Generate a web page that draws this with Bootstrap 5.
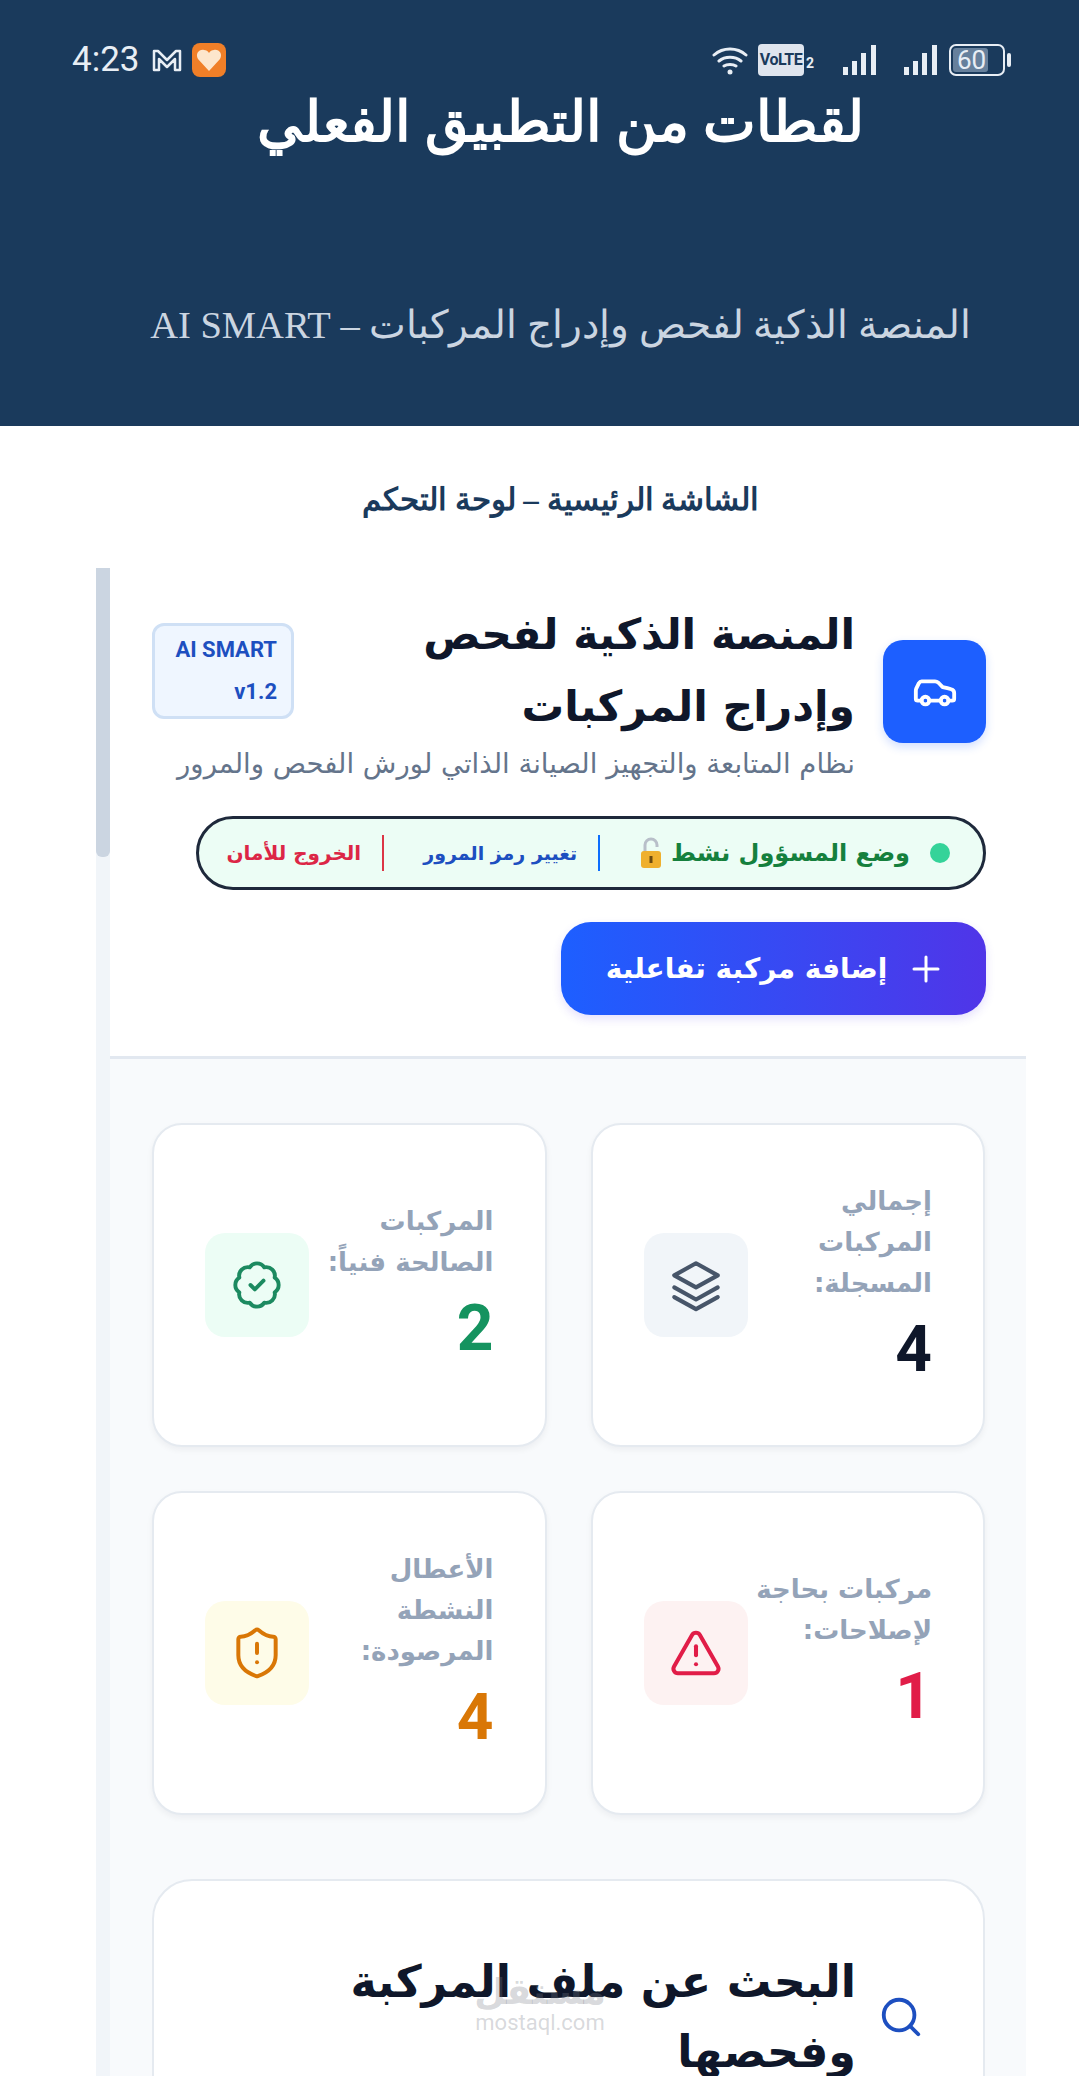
<!DOCTYPE html>
<html lang="ar" dir="rtl">
<head>
    <meta charset="UTF-8">
    <title>لقطات من التطبيق الفعلي</title>
    <link href="https://cdn.jsdelivr.net/npm/bootstrap@5.3.0/dist/css/bootstrap.min.css" rel="stylesheet">
    <style>
        html, body { height: 100%; overflow: hidden; }
        body { font-family: "DejaVu Sans", sans-serif; background: #fff; }
        .page-clip { position: relative; height: 2076px; overflow: hidden; }
        .hero { height: 426px; background: #1a3a5c; padding: 72px 0 0 42px; text-align: center; font-family: "Liberation Serif", "DejaVu Serif", serif; }
        .hero-title { font-size: 56px; font-weight: 700; color: #fff; margin: 0; line-height: 100px; }
        .hero-sub { font-size: 38.500px; color: #cbd5e1; margin: 123px 0 0; line-height: 60px; white-space: nowrap; }
        .screen-title { font-family: "Liberation Serif", "DejaVu Serif", serif; font-size: 31px; font-weight: 700; color: #1a3a5c; text-align: center; margin: 0; height: 142px; padding: 46px 0 0 42px; line-height: 56px; }
        .status-bar { position: absolute; top: 40px; left: 72px; right: 68px; height: 40px; direction: ltr; color: #e8eef5; font-family: Roboto, sans-serif; }
        .status-time { font-size: 35px; line-height: 40px; }
        .status-mail { margin: 0 10px 0 12px; }
        .volte-tag { width: 46px; height: 32px; background: #dfe5ee; color: #1a3a5c; font-size: 16px; font-weight: 700; border-radius: 4px; letter-spacing: -.5px; margin-left: 10px; }
        .sim-num { width: 9px; font-size: 14px; font-weight: 700; align-self: flex-end; margin-left: 2px; line-height: 26px; }
        .signal-gap { margin-left: 28px; }
        .batt { width: 56px; height: 32px; margin-left: 12px; border: 2px solid #e8eef5; border-radius: 7px; padding: 2px; font-size: 26px; line-height: 24px; }
        .batt-fill { width: 72%; height: 100%; background: #66809c; border-radius: 3px; padding-left: 4px; white-space: nowrap; }
        .batt-cap { width: 4px; height: 14px; background: #e8eef5; border-radius: 2px; margin-left: 2px; }
        .panel-wrap { margin: 0 53px 0 96px; }
        .scroll-track { width: 14px; flex: 0 0 14px; background: #f1f5f9; }
        .scroll-thumb { height: 289px; background: #cbd5e1; border-radius: 0 0 6px 6px; }
        .panel-head { background: #fff; height: 491px; padding: 31px 40px 0 42px; border-bottom: 3px solid #e2e8f0; }
        .head-row { gap: 28px; }
        .car-box { width: 103px; height: 103px; flex: 0 0 103px; background: #1d5fff; border-radius: 20px; box-shadow: 0 4px 10px rgba(29, 95, 255, .2); }
        .app-title { font-size: 42.500px; line-height: 72px; font-weight: 700; color: #0f172a; margin: 0; white-space: nowrap; }
        .ver-tag { width: 142px; height: 96px; flex: 0 0 142px; background: #eff6ff; border: 3px solid #cfe0f5; border-radius: 12px; color: #1d4fc0; font-family: Roboto, sans-serif; font-size: 22px; font-weight: 700; line-height: 42px; direction: ltr; text-align: right; padding: 3px 14px 0; }
        .app-sub { font-size: 27.500px; line-height: 40px; color: #64748b; white-space: nowrap; }
        .mode-pill { width: 790px; height: 74px; margin-top: 33px; background: #ecfdf5; border: 3px solid #1e293b; border-radius: 37px; padding: 0 33px; font-weight: 700; white-space: nowrap; }
        .mode-dot { flex: 0 0 20px; height: 20px; background: #34d399; border-radius: 50%; margin-left: 20px; }
        .mode-admin { font-size: 24px; color: #15803d; }
        .mode-pass { font-size: 19px; color: #1d4fc0; }
        .mode-exit { font-size: 20px; color: #dc2646; }
        .mode-sep { flex: 0 0 2px; height: 36px; margin: 0 39px 0 21px; }
        .add-btn { width: 425px; height: 93px; margin-top: 32px; border: 0; border-radius: 30px; background: linear-gradient(90deg, #1d5fff, #5035e8); color: #fff; font-size: 28px; font-weight: 700; box-shadow: 0 4px 10px rgba(80, 53, 232, .15); }
        .panel-body { background: #f8fafc; padding: 64px 41px 0 42px; height: 1508px; }
        .stat-row { --bs-gutter-x: 44px; --bs-gutter-y: 44px; }
        .stat-card { height: 324px; border: 2px solid #e5eaf0; border-radius: 30px; box-shadow: 0 3px 6px rgba(15, 23, 42, .05); padding: 0 51px; }
        .stat-label { font-size: 26px; line-height: 41px; font-weight: 700; color: #94a3b8; }
        .stat-num { font-family: Roboto, sans-serif; font-size: 64px; line-height: 80px; font-weight: 700; margin-top: 6px; }
        .stat-icon { width: 104px; height: 104px; flex: 0 0 104px; border-radius: 20px; }
        .search-card { margin-top: 64px; height: 400px; border: 2px solid #e5eaf0; border-radius: 40px; padding: 66px 59px 0 0; }
        .search-row { gap: 22px; }
        .search-title { font-size: 44.500px; line-height: 70px; font-weight: 700; color: #0f172a; margin: 0; white-space: nowrap; }
        .watermark { position: absolute; left: 470px; top: 1972px; width: 140px; text-align: center; color: rgba(120, 125, 135, .3); pointer-events: none; }
        .watermark-ar { font-size: 36px; font-weight: 700; line-height: 40px; }
        .watermark-en { font-family: Roboto, sans-serif; font-size: 22px; line-height: 22px; }
    </style>
</head>
<body>

<div class="page-clip">
    <!-- Hero -->
    <header class="hero">
        <h1 class="hero-title">لقطات من التطبيق الفعلي</h1>
        <p class="hero-sub">المنصة الذكية لفحص وإدراج المركبات – AI SMART</p>
    </header>

    <!-- Phone status bar lies over the hero -->
    <div class="status-bar d-flex align-items-center justify-content-between">
        <div class="d-flex align-items-center">
            <span class="status-time">4:23</span>
            <svg class="status-mail" width="30" height="24" viewBox="0 0 30 24" fill="none" stroke="#e8eef5" stroke-width="2.500" stroke-linejoin="round"><path d="M2 22V3h4l9 9 9-9h4v19h-5V11l-8 8-8-8v11z"/></svg>
            <svg width="34" height="34" viewBox="0 0 34 34"><rect width="34" height="34" rx="8" fill="#f07f28"/><path d="M17 28 6 16c-3-5 1-10 6-9 2 0 4 1 5 3 1-2 3-3 5-3 5-1 9 4 6 9z" fill="#fde6cc"/></svg>
        </div>
        <div class="d-flex align-items-center">
            <svg width="36" height="30" viewBox="0 0 36 30" fill="none" stroke="#e8eef5" stroke-width="3" stroke-linecap="round"><path d="M2 10c9-8 23-8 32 0M7 16c6-5 16-5 22 0M12 21c3-2 9-2 12 0"/><circle cx="18" cy="27" r="2.500" fill="#e8eef5" stroke="none"/></svg>
            <div class="volte-tag d-flex align-items-center justify-content-center">VoLTE</div>
            <span class="sim-num">2</span>
            <svg class="signal-gap" width="33" height="30" viewBox="0 0 33 30" fill="#e8eef5"><rect x="0" y="22" width="5" height="8"/><rect x="9" y="16" width="5" height="14"/><rect x="18" y="8" width="5" height="22"/><rect x="28" y="0" width="5" height="30"/></svg>
            <svg class="signal-gap" width="33" height="30" viewBox="0 0 33 30" fill="#e8eef5"><rect x="0" y="22" width="5" height="8"/><rect x="9" y="16" width="5" height="14"/><rect x="18" y="8" width="5" height="22"/><rect x="28" y="0" width="5" height="30"/></svg>
            <div class="batt"><div class="batt-fill">60</div></div>
            <div class="batt-cap"></div>
        </div>
    </div>

    <h2 class="screen-title">الشاشة الرئيسية – لوحة التحكم</h2>

    <!-- App screenshot -->
    <div class="panel-wrap d-flex">
        <div class="flex-grow-1">
            <section class="panel-head">
                <div class="head-row d-flex align-items-center">
                    <div class="car-box d-flex align-items-center justify-content-center">
                        <svg width="46" height="46" viewBox="0 0 24 24" fill="none" stroke="#fff" stroke-width="2" stroke-linecap="round" stroke-linejoin="round"><path d="M19 17h2c.6 0 1-.4 1-1v-3c0-.9-.7-1.700-1.500-1.900C18.700 10.600 16 10 16 10s-1.300-1.400-2.200-2.300c-.5-.4-1.100-.7-1.800-.7H5c-.6 0-1.100.4-1.400.9l-1.400 2.900A3.700 3.700 0 0 0 2 12v4c0 .6.4 1 1 1h2"/><circle cx="7" cy="17" r="2"/><path d="M9 17h6"/><circle cx="17" cy="17" r="2"/></svg>
                    </div>
                    <div class="flex-grow-1">
                        <div class="d-flex align-items-center justify-content-between">
                            <h3 class="app-title">المنصة الذكية لفحص<br>وإدراج المركبات</h3>
                            <div class="ver-tag">AI SMART<br>v1.2</div>
                        </div>
                        <div class="app-sub">نظام المتابعة والتجهيز الصيانة الذاتي لورش الفحص والمرور</div>
                    </div>
                </div>

                <div class="mode-pill d-flex align-items-center">
                    <span class="mode-dot"></span>
                    <span class="mode-admin d-flex align-items-center gap-2">
                        <span>وضع المسؤول نشط</span>
                        <svg width="24" height="32" viewBox="0 0 24 32"><path d="M6 15V8a6 6 0 0 1 12 0v2" fill="none" stroke="#b8bfc9" stroke-width="3"/><rect x="2" y="14" width="20" height="17" rx="3" fill="#efb02e"/><rect x="10.500" y="19" width="3" height="7" fill="#6b4a10"/></svg>
                    </span>
                    <span class="mode-sep bg-primary"></span>
                    <span class="mode-pass">تغيير رمز المرور</span>
                    <span class="mode-sep bg-danger"></span>
                    <span class="mode-exit">الخروج للأمان</span>
                </div>

                <button class="add-btn btn d-flex align-items-center justify-content-center gap-4" type="button">
                    <svg width="30" height="30" viewBox="0 0 30 30" stroke="#fff" stroke-width="3" stroke-linecap="round"><path d="M15 3v24M3 15h24"/></svg>
                    إضافة مركبة تفاعلية
                </button>
            </section>

            <section class="panel-body">
                <div class="row stat-row">
                    <div class="col-6">
                        <div class="card stat-card flex-row align-items-center justify-content-between">
                            <div>
                                <div class="stat-label">إجمالي<br>المركبات<br>المسجلة:</div>
                                <div class="stat-num" style="color:#0f172a">4</div>
                            </div>
                            <div class="stat-icon d-flex align-items-center justify-content-center" style="background:#f1f5f9">
                                <svg width="58" height="58" viewBox="0 0 24 24" fill="none" stroke="#475569" stroke-width="1.700" stroke-linecap="round" stroke-linejoin="round"><path d="M12 3 3 8l9 5 9-5z"/><path d="m3 13 9 5 9-5"/><path d="m3 17 9 5 9-5"/></svg>
                            </div>
                        </div>
                    </div>
                    <div class="col-6">
                        <div class="card stat-card flex-row align-items-center justify-content-between">
                            <div>
                                <div class="stat-label">المركبات<br>الصالحة فنياً:</div>
                                <div class="stat-num" style="color:#15935f">2</div>
                            </div>
                            <div class="stat-icon d-flex align-items-center justify-content-center" style="background:#ecfdf5">
                                <svg width="52" height="52" viewBox="0 0 24 24" fill="none" stroke="#1c8a60" stroke-width="1.800" stroke-linecap="round" stroke-linejoin="round"><path d="M3.850 8.620a4 4 0 0 1 4.780-4.770 4 4 0 0 1 6.740 0 4 4 0 0 1 4.780 4.780 4 4 0 0 1 0 6.740 4 4 0 0 1-4.770 4.780 4 4 0 0 1-6.750 0 4 4 0 0 1-4.780-4.770 4 4 0 0 1 0-6.760Z"/><path d="m9 12 2 2 4-4"/></svg>
                            </div>
                        </div>
                    </div>
                    <div class="col-6">
                        <div class="card stat-card flex-row align-items-center justify-content-between">
                            <div>
                                <div class="stat-label">مركبات بحاجة<br>لإصلاحات:</div>
                                <div class="stat-num" style="color:#e11d48">1</div>
                            </div>
                            <div class="stat-icon d-flex align-items-center justify-content-center" style="background:#fdf2f2">
                                <svg width="54" height="54" viewBox="0 0 24 24" fill="none" stroke="#e11d48" stroke-width="1.800" stroke-linecap="round" stroke-linejoin="round"><path d="m21.730 18-8-14a2 2 0 0 0-3.480 0l-8 14A2 2 0 0 0 4 21h16a2 2 0 0 0 1.730-3"/><path d="M12 9v4"/><path d="M12 17h.01"/></svg>
                            </div>
                        </div>
                    </div>
                    <div class="col-6">
                        <div class="card stat-card flex-row align-items-center justify-content-between">
                            <div>
                                <div class="stat-label">الأعطال<br>النشطة<br>المرصودة:</div>
                                <div class="stat-num" style="color:#d97706">4</div>
                            </div>
                            <div class="stat-icon d-flex align-items-center justify-content-center" style="background:#fefce8">
                                <svg width="56" height="56" viewBox="0 0 24 24" fill="none" stroke="#d97706" stroke-width="1.700" stroke-linecap="round" stroke-linejoin="round"><path d="M20 13c0 5-3.500 7.500-7.660 8.950a1 1 0 0 1-.67-.01C7.500 20.500 4 18 4 13V6a1 1 0 0 1 1-1c2 0 4.500-1.200 6.240-2.720a1.170 1.170 0 0 1 1.520 0C14.510 3.810 17 5 19 5a1 1 0 0 1 1 1z"/><path d="M12 8v4"/><path d="M12 16h.01"/></svg>
                            </div>
                        </div>
                    </div>
                </div>

                <div class="card search-card">
                    <div class="search-row d-flex align-items-center">
                        <svg width="46" height="46" viewBox="0 0 24 24" fill="none" stroke="#1d4fc0" stroke-width="2" stroke-linecap="round"><circle cx="11" cy="11" r="8"/><path d="m21 21-4.300-4.300"/></svg>
                        <h3 class="search-title">البحث عن ملف المركبة<br>وفحصها</h3>
                    </div>
                </div>
            </section>
        </div>
        <div class="scroll-track"><div class="scroll-thumb"></div></div>
    </div>

    <!-- Site watermark -->
    <div class="watermark">
        <div class="watermark-ar">مستقل</div>
        <div class="watermark-en">mostaql.com</div>
    </div>
</div>

</body>
</html>
